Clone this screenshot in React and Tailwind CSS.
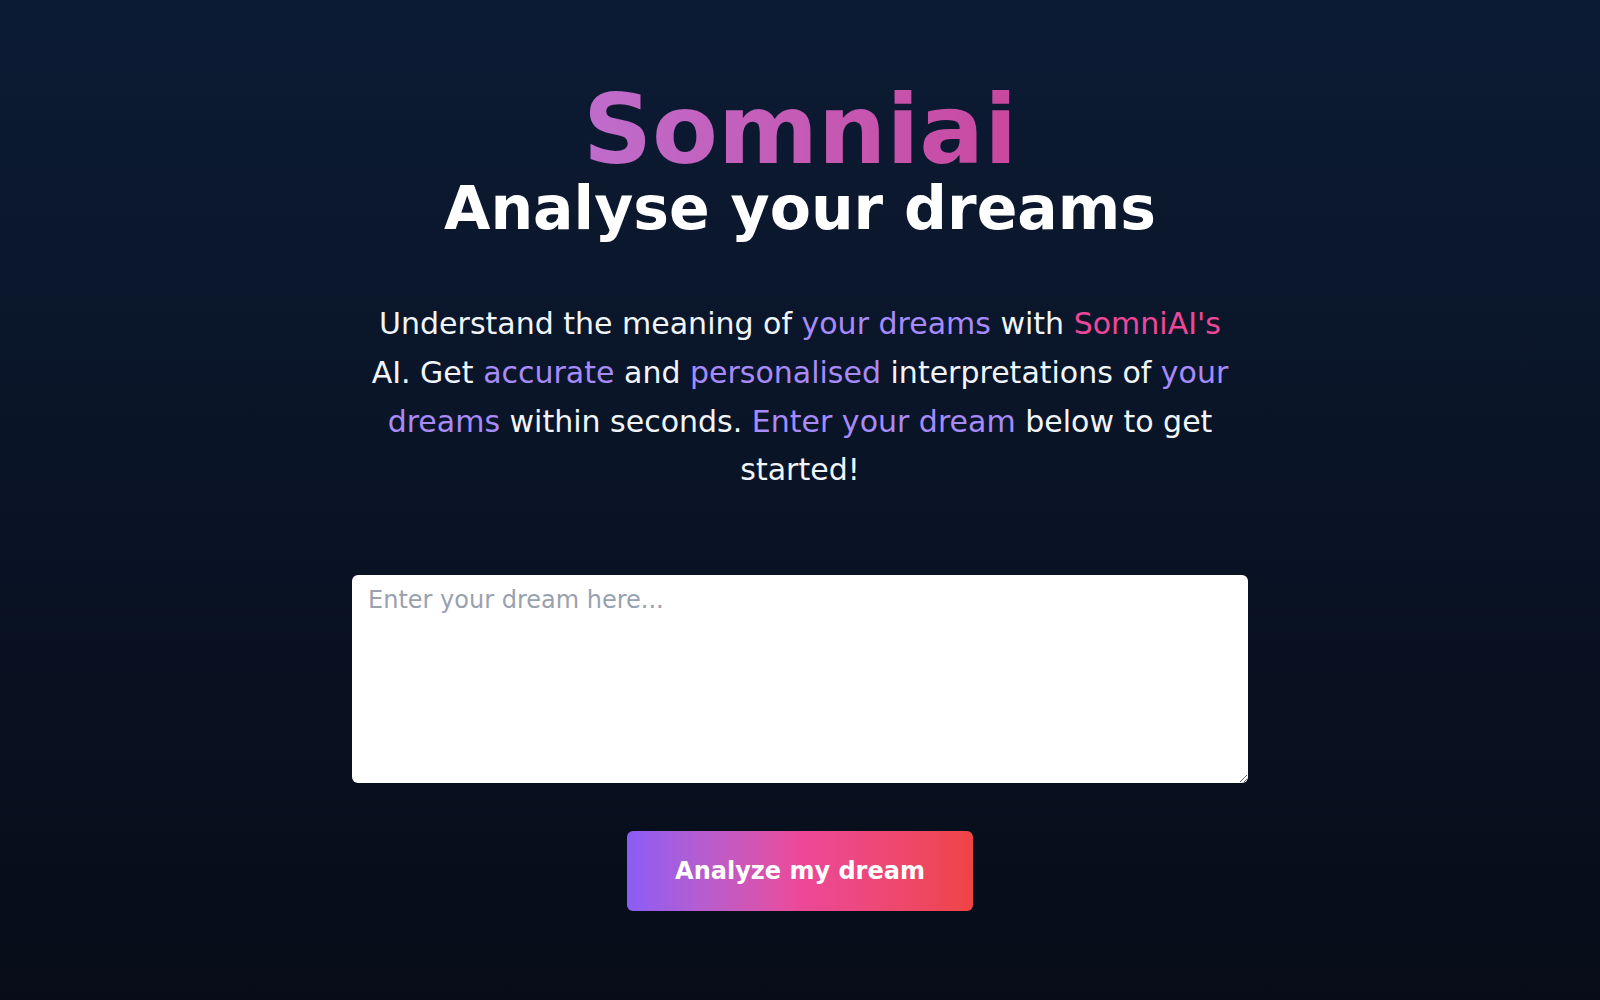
import React, { useState } from "react";

const Hl = ({ children, pink }) => (
  <span className={pink ? "text-[#ec4899]" : "text-[#a78bfa]"}>{children}</span>
);

export default function App() {
  const [dream, setDream] = useState("");

  return (
    <div
      className="min-h-screen w-full bg-gradient-to-b from-[#0c1b34] to-[#070c18] text-white"
      style={{ fontFamily: '"DejaVu Sans", sans-serif' }}
    >
      <main className="flex flex-col items-center pt-[82px] pb-20">
        <h1 className="text-[96px] font-bold leading-none bg-gradient-to-r from-[#bf6ccc] to-[#c9479f] bg-clip-text text-transparent">
          Somniai
        </h1>
        <h2 className="text-6xl font-bold leading-none text-white">Analyse your dreams</h2>

        <p className="mt-[62px] max-w-[860px] text-center text-[30px] leading-relaxed text-slate-100">
          Understand the meaning of <Hl>your dreams</Hl> with <Hl pink>SomniAI's</Hl> AI. Get{" "}
          <Hl>accurate</Hl> and <Hl>personalised</Hl> interpretations of <Hl>your dreams</Hl> within
          seconds. <Hl>Enter your dream</Hl> below to get started!
        </p>

        <textarea
          value={dream}
          onChange={(e) => setDream(e.target.value)}
          placeholder="Enter your dream here..."
          className="mt-20 h-52 w-[896px] rounded-md bg-white px-4 pt-[7px] pb-4 text-[24px] leading-normal text-gray-900 placeholder:text-gray-400 outline-none"
        />

        <button className="mt-12 rounded-md bg-gradient-to-r from-[#8b5cf6] via-[#ec4899] to-[#ef4444] px-12 py-6 text-2xl leading-8 font-bold text-white">
          Analyze my dream
        </button>
      </main>
    </div>
  );
}
